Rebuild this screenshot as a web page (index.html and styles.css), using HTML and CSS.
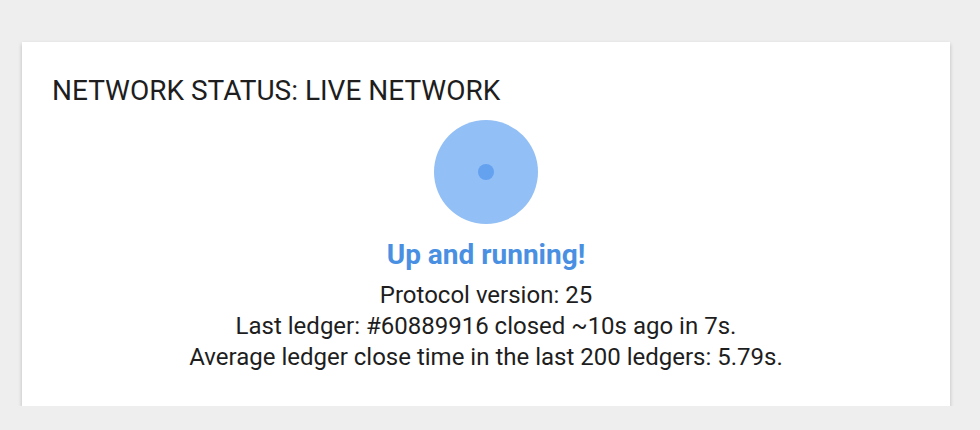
FILE: index.html
```html
<!DOCTYPE html>
<html>
<head>
	<title>Network status</title>
	<meta charset="UTF-8">
	<link rel="stylesheet" href="styles.css">
</head>
<body>
	<div class="card">
		<h2 class="title">NETWORK STATUS: LIVE NETWORK</h2>
		<div class="status">
			<div class="pulse">
				<div class="dot"></div>
			</div>
			<div class="headline">Up and running!</div>
			<div class="details">
				<div>Protocol version: 25</div>
				<div>Last ledger: #60889916 closed ~10s ago in 7s.</div>
				<div>Average ledger close time in the last 200 ledgers: 5.79s.</div>
			</div>
		</div>
	</div>
</body>
</html>
```

FILE: styles.css
```css
body {
	margin: 0;
	background: #eeeeee;
	font-family: Roboto, "Liberation Sans", sans-serif;
	color: #222;
	padding: 42px 30px 0 22px;
}

.card {
	background: #fff;
	box-shadow: 0 2px 4px rgba(0, 0, 0, .22);
	height: 364px;
	box-sizing: border-box;
	padding: 33px 30px 0;
}

.title {
	margin: 0;
	font-size: 28px;
	font-weight: 400;
	line-height: 32px;
	color: #1e1e1e;
}

.status {
	display: flex;
	flex-direction: column;
	align-items: center;
	text-align: center;
}

.pulse {
	width: 104px;
	height: 104px;
	border-radius: 50%;
	background: #92bff5;
	display: flex;
	align-items: center;
	justify-content: center;
	margin-top: 13px;
}

.dot {
	width: 16px;
	height: 16px;
	border-radius: 50%;
	background: #64a2f0;
}

.headline {
	margin-top: 15px;
	font-size: 28px;
	font-weight: 700;
	color: #4a90e2;
	line-height: 32px;
}

.details {
	margin-top: 9px;
	font-size: 24px;
	line-height: 31px;
	color: #1e1e1e;
}
```
